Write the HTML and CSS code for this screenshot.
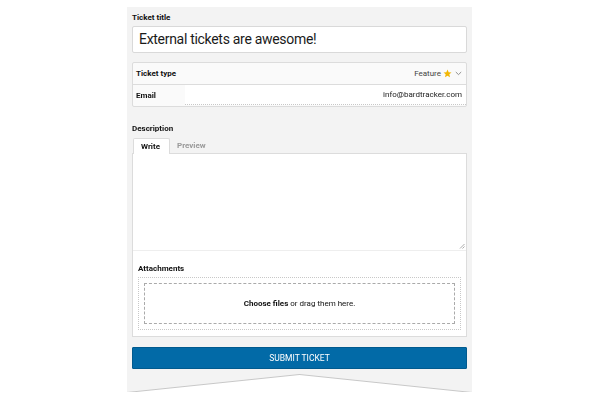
FILE: index.html
```html
<!DOCTYPE html>
<html>
<head>
<meta charset="utf-8">
<link rel="stylesheet" href="styles.css">
</head>
<body>
<div class="shadow">
  <div class="panel">
    <div class="label">Ticket title</div>
    <div class="title-input">External tickets are awesome!</div>
    <div class="group">
      <div class="row type-row">
        <span class="row-label">Ticket type</span>
        <span class="type-value">Feature
          <svg class="star" width="9" height="9" viewBox="0 0 24 24"><path d="M12 1.5l3.1 7 7.6.7-5.8 5 1.8 7.5L12 17.8l-6.7 3.9 1.8-7.5-5.8-5 7.6-.7z" fill="#f2b705"/></svg>
          <svg class="chev" width="7" height="5" viewBox="0 0 7 5"><path d="M0.8 1l2.7 2.6L6.2 1" fill="none" stroke="#777" stroke-width="0.8"/></svg>
        </span>
      </div>
      <div class="row email-row">
        <span class="row-label email-label">Email</span>
        <span class="email-input">info@bardtracker.com</span>
      </div>
    </div>
    <div class="label desc-label">Description</div>
    <div class="tabs">
      <span class="tab active">Write</span>
      <span class="tab">Preview</span>
    </div>
    <div class="editor">
      <div class="textarea">
        <svg class="grip" width="6" height="6" viewBox="0 0 6 6"><path d="M5.5 1L1 5.5M5.5 3.5L3.5 5.5" stroke="#888" stroke-width="0.7"/></svg>
      </div>
      <div class="attach">
        <div class="attach-label">Attachments</div>
        <div class="drop-outer">
          <div class="drop-inner"><b>Choose files</b>&nbsp;or drag them here.</div>
        </div>
      </div>
    </div>
    <div class="submit">SUBMIT TICKET</div>
  </div>
</div>
</body>
</html>
```
FILE: styles.css
```css
html, body {
  margin: 0;
  padding: 0;
  background: #ffffff;
}
body {
  font-family: Roboto, "Liberation Sans", sans-serif;
  color: #111;
}
.shadow {
  margin-left: 127px;
  margin-top: 7px;
  width: 345px;
  filter: drop-shadow(0 1px 0 #c8c8c8);
}
.panel {
  background: #f3f3f3;
  height: 385px;
  box-sizing: border-box;
  padding: 6px 5px 0 5px;
  clip-path: polygon(0 0, 100% 0, 100% 100%, 50% calc(100% - 18px), 0 100%);
}
.label {
  font-size: 8px;
  font-weight: bold;
  line-height: 10px;
  height: 10px;
}
.title-input {
  margin-top: 3px;
  height: 27px;
  box-sizing: border-box;
  background: #fff;
  border: 1px solid #d9d9d9;
  border-radius: 2px;
  font-size: 14px;
  letter-spacing: -0.3px;
  line-height: 25px;
  padding-left: 6px;
  color: #1a1a1a;
}
.group {
  margin-top: 9px;
  border: 1px solid #dcdcdc;
  border-radius: 2px;
  background: #fafafa;
}
.row {
  display: flex;
  align-items: center;
  height: 21px;
  font-size: 8px;
}
.type-row {
  border-bottom: 1px solid #dcdcdc;
  justify-content: space-between;
}
.row-label {
  font-weight: bold;
  padding-left: 3px;
}
.type-value {
  display: flex;
  align-items: center;
  color: #444;
  padding-right: 4px;
}
.star {
  margin-left: 2px;
}
.chev {
  margin-left: 3px;
}
.email-label {
  width: 49px;
  flex: none;
}
.email-input {
  flex: 1;
  align-self: stretch;
  background: #fff;
  text-align: right;
  line-height: 19px;
  padding-right: 4px;
  border-bottom: 1px dotted #c8c8c8;
  margin-bottom: 1px;
  color: #222;
}
.desc-label {
  margin-top: 17px;
}
.tabs {
  display: flex;
  margin-top: 4px;
  height: 16px;
  font-size: 8px;
  font-weight: bold;
  position: relative;
  z-index: 1;
}
.tab {
  padding: 0 9px 0 7px;
  line-height: 15px;
  color: #999;
}
.tab.active {
  color: #111;
  background: #fff;
  border: 1px solid #dcdcdc;
  border-bottom: none;
  border-radius: 2px 2px 0 0;
  height: 16px;
  box-sizing: border-box;
  margin-left: 1px;
}
.editor {
  margin-top: -1px;
  background: #fff;
  border: 1px solid #dcdcdc;
  height: 184px;
  box-sizing: border-box;
  display: flex;
  flex-direction: column;
}
.textarea {
  height: 96px;
  border-bottom: 1px solid #eeeeee;
  position: relative;
}
.grip {
  position: absolute;
  right: 1px;
  bottom: 1px;
}
.attach {
  padding: 13px 5px 0 5px;
}
.attach-label {
  font-size: 8px;
  font-weight: bold;
  line-height: 10px;
}
.drop-outer {
  margin-top: 3px;
  border: 1px dotted #c8c8c8;
  padding: 5px;
  height: 53px;
  box-sizing: border-box;
}
.drop-inner {
  border: 1px dashed #aaa;
  height: 100%;
  box-sizing: border-box;
  display: flex;
  align-items: center;
  justify-content: center;
  font-size: 8px;
  color: #111;
}
.submit {
  margin-top: 10px;
  height: 22px;
  background: #026aa7;
  border: 1px solid #015a8e;
  box-sizing: border-box;
  border-radius: 1px;
  color: #fff;
  font-size: 8.5px;
  line-height: 20px;
  text-align: center;
}
```
